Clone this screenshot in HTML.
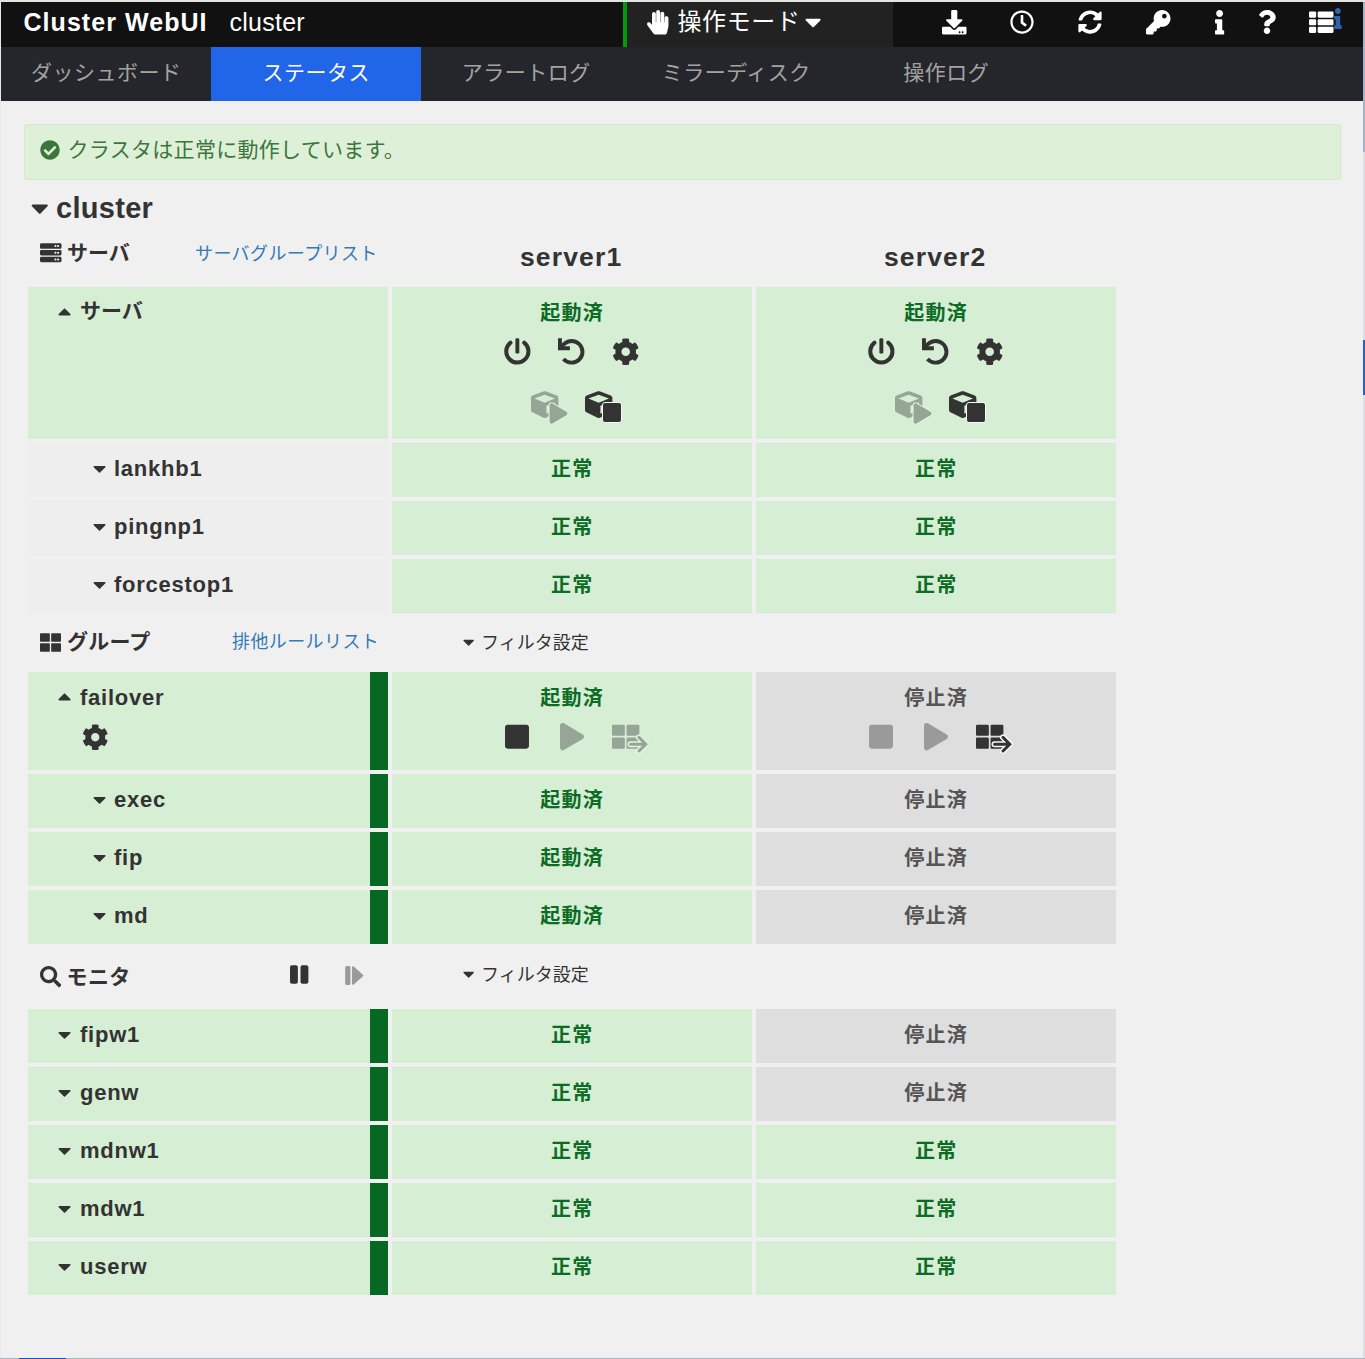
<!DOCTYPE html>
<html lang="ja"><head><meta charset="utf-8"><title>Cluster WebUI</title>
<style>
*{box-sizing:border-box;margin:0;padding:0}
html,body{width:1365px;height:1359px;overflow:hidden}
body{position:relative;background:#f0f0f0;color:#333;font-family:"Liberation Sans","Noto Sans CJK JP",sans-serif;font-size:21px}
.abs,.ic,.t{position:absolute}
.ic{display:block;overflow:visible}
.t{white-space:nowrap;line-height:30px;height:30px}
.b{font-weight:bold}
.c{text-align:center}
#hdr{left:1px;top:2px;width:1362px;height:45px;background:#111}
#tabs{left:1px;top:47px;width:1362px;height:54px;background:#25262b}
.tab{position:absolute;top:-1px;height:54px;width:210px;text-align:center;color:#a3a3a3;font-size:21px;line-height:54px;letter-spacing:.5px;text-indent:.5px}
.tab.on{top:0;line-height:52px}
.tab.on{background:#2165e8;color:#fff}
#mode{left:623px;top:2px;width:270px;height:45px;background:#222;border-left:4px solid #029a0b}
#alert{left:24px;top:124px;width:1317px;height:56px;background:#dff0d8;border:1px solid #d6e9c6;border-radius:3px}
.cell{position:absolute}
.g{background:#d6eed4}
.s{background:#dedede}
.e{background:#eeeeee}
.bar{position:absolute;left:370px;width:18px;background:#076823}
.st{position:absolute;left:0;width:360px;text-align:center;font-weight:bold;font-size:20px;letter-spacing:1.2px;text-indent:.3px;line-height:30px;height:30px;white-space:nowrap}
.gt{color:#0c6b25}
.xt{color:#555}
.lbl{position:absolute;font-weight:bold;font-size:22px;letter-spacing:.75px;line-height:30px;height:30px;white-space:nowrap;color:#333}
.jl{position:absolute;font-weight:bold;font-size:21px;line-height:30px;height:30px;white-space:nowrap;color:#333}
.lnk{position:absolute;letter-spacing:.4px;font-size:18px;line-height:26px;height:26px;white-space:nowrap;color:#337ab7}
.flt{position:absolute;font-size:18px;line-height:26px;height:26px;white-space:nowrap;color:#333}
</style></head>
<body>
<div class="abs" style="left:0;top:0;width:1365px;height:2px;background:#e3e5e3"></div>
<div class="abs" style="left:0;top:2px;width:1px;height:1357px;background:#e9e9e9"></div>
<div class="abs" style="left:1363px;top:2px;width:2px;height:1357px;background:#dcdee0"></div><div class="abs" style="left:1363px;top:2px;width:2px;height:150px;background:#a6b4ca"></div><div class="abs" style="left:1363px;top:340px;width:2px;height:55px;background:#2a62c0"></div>
<div class="abs" style="left:0;top:1358px;width:1365px;height:1px;background:#aab4be"></div><div class="abs" style="left:19px;top:1358px;width:47px;height:1px;background:#1a50c8"></div>
<div id="hdr" class="abs">
<div class="t b" style="left:22.5px;top:5px;font-size:25px;letter-spacing:1.05px;color:#fff">Cluster WebUI</div>
<div class="t" style="left:228.500px;top:5px;font-size:25px;letter-spacing:.25px;color:#fff">cluster</div>
<svg class="ic" style="left:941px;top:8px;width:24.5px;height:24.5px" viewBox="0 0 512 512" ><path fill="#fff" d="M216 0h80c13.3 0 24 10.7 24 24v168h87.7c17.8 0 26.7 21.5 14.1 34.1L269.7 378.3c-7.5 7.5-19.8 7.5-27.3 0L90.1 226.1c-12.6-12.6-3.7-34.1 14.1-34.1H192V24c0-13.3 10.7-24 24-24zm296 376v112c0 13.3-10.7 24-24 24H24c-13.3 0-24-10.7-24-24V376c0-13.3 10.7-24 24-24h146.7l49 49c20.1 20.1 52.5 20.1 72.6 0l49-49H488c13.3 0 24 10.7 24 24zm-124 88c0-11-9-20-20-20s-20 9-20 20 9 20 20 20 20-9 20-20zm64 0c0-11-9-20-20-20s-20 9-20 20 9 20 20 20 20-9 20-20z"/></svg>
<svg class="ic" style="left:1008.8px;top:8px;width:24px;height:24px" viewBox="0 0 512 512" ><path fill="#fff" d="M256 8C119 8 8 119 8 256s111 248 248 248 248-111 248-248S393 8 256 8zm0 448c-110.5 0-200-89.5-200-200S145.5 56 256 56s200 89.5 200 200-89.5 200-200 200zm61.8-104.4l-84.9-61.700c-3.100-2.300-4.900-5.900-4.900-9.700V116c0-6.600 5.400-12 12-12h32c6.600 0 12 5.400 12 12v141.700l66.800 48.600c5.400 3.900 6.500 11.400 2.600 16.800L334.600 349c-3.900 5.300-11.400 6.500-16.800 2.600z"/></svg>
<svg class="ic" style="left:1076.8px;top:8px;width:24px;height:24px" viewBox="0 0 512 512" ><path fill="#fff" d="M370.72 133.28C339.458 104.008 298.888 87.962 255.848 88c-77.458.068-144.328 53.178-162.791 126.85-1.344 5.363-6.122 9.15-11.651 9.15H24.103c-7.498 0-13.194-6.807-11.807-14.176C33.933 94.924 134.813 8 256 8c66.448 0 126.791 26.136 171.315 68.685L463.03 40.97C478.149 25.851 504 36.559 504 57.941V192c0 13.255-10.745 24-24 24H345.941c-21.382 0-32.090-25.851-16.971-40.971l41.750-41.749zM32 296h134.059c21.382 0 32.090 25.851 16.971 40.971l-41.750 41.750c31.262 29.273 71.835 45.319 114.876 45.280 77.418-.070 144.315-53.144 162.787-126.849 1.344-5.363 6.122-9.150 11.651-9.150h57.304c7.498 0 13.194 6.807 11.807 14.176C478.067 417.076 377.187 504 256 504c-66.448 0-126.791-26.136-171.315-68.685L48.970 471.030C33.851 486.149 8 475.441 8 454.059V320c0-13.255 10.745-24 24-24z"/></svg>
<svg class="ic" style="left:1145px;top:8px;width:24.5px;height:24.5px" viewBox="0 0 512 512" ><path fill="#fff" d="M512 176.001C512 273.203 433.202 352 336 352c-11.220 0-22.190-1.062-32.827-3.069l-24.012 27.014A23.999 23.999 0 0 1 261.223 384H224v40c0 13.255-10.745 24-24 24h-40v40c0 13.255-10.745 24-24 24H24c-13.255 0-24-10.745-24-24v-78.059c0-6.365 2.529-12.470 7.029-16.971l161.802-161.802C163.108 213.814 160 195.271 160 176 160 78.798 238.797.001 335.999 0 433.488-.001 512 78.511 512 176.001zM336 128c0 26.510 21.490 48 48 48s48-21.490 48-48-21.490-48-48-48-48 21.490-48 48z"/></svg>
<svg class="ic" style="left:1213.5px;top:8px;width:9.2px;height:24.5px" viewBox="0 0 192 512" ><path fill="#fff" d="M20 424.229h20V279.771H20c-11.046 0-20-8.954-20-20V212c0-11.046 8.954-20 20-20h112c11.046 0 20 8.954 20 20v212.229h20c11.046 0 20 8.954 20 20V492c0 11.046-8.954 20-20 20H20c-11.046 0-20-8.954-20-20v-47.771c0-11.046 8.954-20 20-20zM96 0C56.235 0 24 32.235 24 72s32.235 72 72 72 72-32.235 72-72S135.764 0 96 0z"/></svg>
<svg class="ic" style="left:1257px;top:8px;width:18px;height:24px" viewBox="0 0 384 512" ><path fill="#fff" d="M202.021 0C122.202 0 70.503 32.703 29.914 91.026c-7.363 10.580-5.093 25.086 5.178 32.874l43.138 32.709c10.373 7.865 25.132 6.026 33.253-4.148 25.049-31.381 43.630-49.449 82.757-49.449 30.764 0 68.816 19.799 68.816 49.631 0 22.552-18.617 34.134-48.993 51.164-35.423 19.860-82.299 44.576-82.299 106.405V320c0 13.255 10.745 24 24 24h72.471c13.255 0 24-10.745 24-24v-5.773c0-42.860 125.268-44.645 125.268-160.627C377.504 66.256 286.902 0 202.021 0zM192 373.459c-38.196 0-69.271 31.075-69.271 69.271 0 38.195 31.075 69.270 69.271 69.270s69.271-31.075 69.271-69.271-31.075-69.270-69.271-69.270z"/></svg>
<svg class="ic" style="left:1307.5px;top:8px;width:24.5px;height:24.5px" viewBox="0 0 512 512" ><path fill="#fff" d="M149.333 216v80c0 13.255-10.745 24-24 24H24c-13.255 0-24-10.745-24-24v-80c0-13.255 10.745-24 24-24h101.333c13.255 0 24 10.745 24 24zM0 376v80c0 13.255 10.745 24 24 24h101.333c13.255 0 24-10.745 24-24v-80c0-13.255-10.745-24-24-24H24c-13.255 0-24 10.745-24 24zM125.333 32H24C10.745 32 0 42.745 0 56v80c0 13.255 10.745 24 24 24h101.333c13.255 0 24-10.745 24-24V56c0-13.255-10.745-24-24-24zm80 448H488c13.255 0 24-10.745 24-24v-80c0-13.255-10.745-24-24-24H205.333c-13.255 0-24 10.745-24 24v80c0 13.255 10.745 24 24 24zm-24-424v80c0 13.255 10.745 24 24 24H488c13.255 0 24-10.745 24-24V56c0-13.255-10.745-24-24-24H205.333c-13.255 0-24 10.745-24 24zm24 264H488c13.255 0 24-10.745 24-24v-80c0-13.255-10.745-24-24-24H205.333c-13.255 0-24 10.745-24 24v80c0 13.255 10.745 24 24 24z"/></svg>
<svg class="ic" style="left:1332.5px;top:5.6px;width:7.8px;height:21px" viewBox="0 0 192 512" ><path fill="#2f63ad" d="M20 424.229h20V279.771H20c-11.046 0-20-8.954-20-20V212c0-11.046 8.954-20 20-20h112c11.046 0 20 8.954 20 20v212.229h20c11.046 0 20 8.954 20 20V492c0 11.046-8.954 20-20 20H20c-11.046 0-20-8.954-20-20v-47.771c0-11.046 8.954-20 20-20zM96 0C56.235 0 24 32.235 24 72s32.235 72 72 72 72-32.235 72-72S135.764 0 96 0z"/></svg>
</div>
<div id="mode" class="abs">
<svg class="ic" style="left:20.399999999999977px;top:8px;width:21.5px;height:24.5px" viewBox="0 0 448 512" ><path fill="#fff" d="M408.781 128.007C386.356 127.578 368 146.360 368 168.790V256h-8V79.790c0-22.430-18.356-41.212-40.781-40.783C297.488 39.423 280 57.169 280 79v177h-8V40.790C272 18.360 253.644-.422 231.219.007 209.488.423 192 18.169 192 40v216h-8V80.790c0-22.430-18.356-41.212-40.781-40.783C121.488 40.423 104 58.169 104 80v235.992l-31.648-43.519c-12.993-17.866-38.009-21.817-55.877-8.823-17.865 12.994-21.815 38.010-8.822 55.877l125.601 172.705A48 48 0 0 0 172.073 512h197.590c22.274 0 41.622-15.324 46.724-37.006l26.508-112.660a192.011 192.011 0 0 0 5.104-43.975V168c.001-21.831-17.487-39.577-39.218-39.993z"/></svg>
<div class="t" style="left:50.500px;top:5px;font-size:24px;letter-spacing:.6px;color:#fff">操作モード</div>
<svg class="ic" style="left:178.3px;top:6.800000000000001px;width:16.2px;height:26px" viewBox="0 0 320 512" ><path fill="#fff" d="M31.3 192h257.300c17.800 0 26.700 21.500 14.100 34.100L174.100 354.800c-7.800 7.800-20.500 7.800-28.300 0L17.200 226.100C4.600 213.500 13.500 192 31.300 192z"/></svg>
</div>
<div id="tabs" class="abs">
<div class="tab" style="left:0px">ダッシュボード</div>
<div class="tab on" style="left:210px">ステータス</div>
<div class="tab" style="left:420px">アラートログ</div>
<div class="tab" style="left:630px">ミラーディスク</div>
<div class="tab" style="left:840px">操作ログ</div>
</div>
<div id="alert" class="abs">
<svg class="ic" style="left:15px;top:15px;width:20px;height:20px" viewBox="0 0 512 512" ><path fill="#3c763d" d="M504 256c0 136.967-111.033 248-248 248S8 392.967 8 256 119.033 8 256 8s248 111.033 248 248zM227.314 387.314l184-184c6.248-6.248 6.248-16.379 0-22.627l-22.627-22.627c-6.248-6.249-16.379-6.249-22.628 0L216 308.118l-70.059-70.059c-6.248-6.248-16.379-6.248-22.628 0l-22.627 22.627c-6.248 6.248-6.248 16.379 0 22.627l104 104c6.249 6.249 16.379 6.249 22.628.001z"/></svg>
<div class="t" style="left:42.500px;top:10px;font-size:21px;letter-spacing:.3px;color:#3c763d">クラスタは正常に動作しています。</div>
</div>
<svg class="ic" style="left:30.6px;top:194px;width:17.5px;height:28px" viewBox="0 0 320 512" ><path fill="#333333" d="M31.3 192h257.300c17.800 0 26.700 21.500 14.100 34.100L174.100 354.800c-7.800 7.800-20.500 7.800-28.300 0L17.200 226.100C4.600 213.500 13.500 192 31.300 192z"/></svg>
<div class="t b" style="left:56px;top:190px;font-size:29px;line-height:36px;height:36px;letter-spacing:.3px">cluster</div>
<svg class="ic" style="left:39.5px;top:242.3px;width:21.5px;height:21.5px" viewBox="0 0 512 512" ><path fill="#333333" d="M480 160H32c-17.673 0-32-14.327-32-32V64c0-17.673 14.327-32 32-32h448c17.673 0 32 14.327 32 32v64c0 17.673-14.327 32-32 32zm-48-88c-13.255 0-24 10.745-24 24s10.745 24 24 24 24-10.745 24-24-10.745-24-24-24zm-64 0c-13.255 0-24 10.745-24 24s10.745 24 24 24 24-10.745 24-24-10.745-24-24-24zm112 248H32c-17.673 0-32-14.327-32-32v-64c0-17.673 14.327-32 32-32h448c17.673 0 32 14.327 32 32v64c0 17.673-14.327 32-32 32zm-48-88c-13.255 0-24 10.745-24 24s10.745 24 24 24 24-10.745 24-24-10.745-24-24-24zm-64 0c-13.255 0-24 10.745-24 24s10.745 24 24 24 24-10.745 24-24-10.745-24-24-24zm112 248H32c-17.673 0-32-14.327-32-32v-64c0-17.673 14.327-32 32-32h448c17.673 0 32 14.327 32 32v64c0 17.673-14.327 32-32 32zm-48-88c-13.255 0-24 10.745-24 24s10.745 24 24 24 24-10.745 24-24-10.745-24-24-24zm-64 0c-13.255 0-24 10.745-24 24s10.745 24 24 24 24-10.745 24-24-10.745-24-24-24z"/></svg>
<div class="jl" style="left:67px;top:238px">サーバ</div>
<div class="lnk" style="left:195px;top:241px">サーバグループリスト</div>
<div class="t b c" style="left:391px;width:360px;top:239px;font-size:26.500px;line-height:36px;height:36px;letter-spacing:1.150px;text-indent:.2px">server1</div>
<div class="t b c" style="left:755px;width:360px;top:239px;font-size:26.500px;line-height:36px;height:36px;letter-spacing:1.150px;text-indent:.2px">server2</div>
<div class="cell g" style="left:28px;top:287px;width:360px;height:152px">
<svg class="ic" style="left:30.4px;top:14.200000000000012px;width:13.1px;height:21px" viewBox="0 0 320 512" ><path fill="#333333" d="M288.662 352H31.338c-17.818 0-26.741-21.543-14.142-34.142l128.662-128.662c7.810-7.810 20.474-7.810 28.284 0l128.662 128.662c12.600 12.599 3.676 34.142-14.142 34.142z"/></svg>
<div class="jl" style="left:52px;top:9px">サーバ</div>
</div>
<div class="cell g" style="left:392px;top:287px;width:360px;height:152px"><div class="st gt" style="top:10.5px">起動済</div>
<svg class="ic" style="left:110px;top:49px;width:30px;height:30px" viewBox="0 0 30 30" fill="none" stroke="#333333" stroke-width="4"><path d="M22.180 6.700A11.100 11.100 0 1 1 8.520 6.700" stroke-linecap="round"/><rect x="13.400" y="2.300" width="3.900" height="15.200" rx="1.300" fill="#333333" stroke="none"/></svg>
<svg class="ic" style="left:164px;top:49px;width:30px;height:30px" viewBox="0 0 30 30" fill="none" stroke="#333333" stroke-width="3.900"><path d="M3.950 2.200V12.200H13.900" stroke-linejoin="miter"/><path d="M3.950 12.200L7.900 8.200A10.850 10.850 0 1 1 7.500 23" stroke-linejoin="round"/></svg>
<svg class="ic" style="left:220px;top:51px;width:27.4px;height:27.4px" viewBox="0 0 512 512" ><path fill="#333333" d="M487.400 315.700l-42.600-24.600c4.300-23.200 4.300-47 0-70.200l42.600-24.600c4.900-2.800 7.100-8.600 5.500-14-11.100-35.600-30-67.800-54.700-94.600-3.800-4.100-10-5.100-14.800-2.300L380.800 110c-17.900-15.400-38.500-27.300-60.800-35.100V25.800c0-5.600-3.900-10.500-9.400-11.700-36.700-8.200-74.300-7.800-109.200 0-5.500 1.200-9.400 6.100-9.400 11.700V75c-22.200 7.900-42.800 19.800-60.800 35.100L88.700 85.500c-4.900-2.800-11-1.900-14.800 2.300-24.700 26.700-43.600 58.900-54.700 94.600-1.700 5.400.6 11.200 5.500 14L67.300 221c-4.300 23.200-4.300 47 0 70.200l-42.600 24.600c-4.900 2.800-7.100 8.600-5.500 14 11.100 35.600 30 67.800 54.700 94.600 3.800 4.100 10 5.100 14.800 2.300l42.600-24.600c17.900 15.400 38.500 27.300 60.800 35.100v49.200c0 5.600 3.900 10.500 9.400 11.700 36.700 8.200 74.300 7.800 109.200 0 5.500-1.200 9.400-6.100 9.400-11.700v-49.200c22.200-7.900 42.800-19.800 60.800-35.100l42.600 24.600c4.900 2.800 11 1.900 14.800-2.300 24.700-26.700 43.600-58.900 54.700-94.600 1.500-5.500-.7-11.300-5.600-14.100zM256 336c-44.100 0-80-35.900-80-80s35.900-80 80-80 80 35.900 80 80-35.900 80-80 80z"/></svg>
<svg class="ic" style="left:139px;top:104px;width:27.4px;height:27.4px" viewBox="0 0 512 512" ><path fill="#95a596" d="M239.1 6.300l-208 78c-18.700 7-31.100 25-31.100 45v225.100c0 18.200 10.300 34.800 26.500 42.900l208 104c13.500 6.800 29.400 6.800 42.900 0l208-104c16.300-8.100 26.500-24.800 26.500-42.900V129.300c0-20-12.400-37.900-31.100-44.900l-208-78C262 2.200 250 2.200 239.100 6.300zM256 68.400l192 72v1.100l-192 78-192-78v-1.100l192-72zm32 356V275.500l160-65v133.900l-160 80z"/></svg><svg class="ic" style="left:155.5px;top:114.5px;width:21px;height:23px" viewBox="-32 -32 512 576"><path fill="#95a596" stroke="#e6f5e4" stroke-width="50" stroke-linejoin="round" paint-order="stroke" d="M424.4 214.7L72.4 6.600C43.800-10.300 0 6.100 0 47.900V464c0 37.500 40.700 60.100 72.400 41.300l352-208c31.400-18.500 31.500-64.100 0-82.600z"/></svg>
<svg class="ic" style="left:193px;top:104px;width:27.4px;height:27.4px" viewBox="0 0 512 512" ><path fill="#333333" d="M239.1 6.300l-208 78c-18.700 7-31.100 25-31.100 45v225.100c0 18.200 10.300 34.800 26.500 42.900l208 104c13.500 6.800 29.400 6.800 42.900 0l208-104c16.300-8.100 26.500-24.800 26.500-42.900V129.300c0-20-12.400-37.900-31.100-44.900l-208-78C262 2.200 250 2.200 239.100 6.300zM256 68.400l192 72v1.100l-192 78-192-78v-1.100l192-72zm32 356V275.500l160-65v133.900l-160 80z"/></svg><div class="abs" style="left:209.6px;top:115.2px;width:20.4px;height:20.6px;background:#333333;border:1px solid #f4fbf3;border-radius:3px"></div>
</div>
<div class="cell g" style="left:756px;top:287px;width:360px;height:152px"><div class="st gt" style="top:10.5px">起動済</div>
<svg class="ic" style="left:110px;top:49px;width:30px;height:30px" viewBox="0 0 30 30" fill="none" stroke="#333333" stroke-width="4"><path d="M22.180 6.700A11.100 11.100 0 1 1 8.520 6.700" stroke-linecap="round"/><rect x="13.400" y="2.300" width="3.900" height="15.200" rx="1.300" fill="#333333" stroke="none"/></svg>
<svg class="ic" style="left:164px;top:49px;width:30px;height:30px" viewBox="0 0 30 30" fill="none" stroke="#333333" stroke-width="3.900"><path d="M3.950 2.200V12.200H13.900" stroke-linejoin="miter"/><path d="M3.950 12.200L7.900 8.200A10.850 10.850 0 1 1 7.500 23" stroke-linejoin="round"/></svg>
<svg class="ic" style="left:220px;top:51px;width:27.4px;height:27.4px" viewBox="0 0 512 512" ><path fill="#333333" d="M487.400 315.700l-42.600-24.600c4.300-23.200 4.300-47 0-70.200l42.600-24.600c4.900-2.800 7.100-8.600 5.500-14-11.100-35.600-30-67.800-54.700-94.600-3.800-4.100-10-5.100-14.800-2.300L380.800 110c-17.900-15.400-38.500-27.300-60.800-35.100V25.800c0-5.600-3.900-10.500-9.400-11.700-36.700-8.200-74.300-7.800-109.200 0-5.500 1.200-9.400 6.100-9.400 11.700V75c-22.200 7.900-42.800 19.800-60.800 35.100L88.700 85.500c-4.900-2.800-11-1.900-14.800 2.300-24.700 26.700-43.600 58.900-54.700 94.600-1.700 5.400.6 11.200 5.500 14L67.300 221c-4.300 23.200-4.300 47 0 70.200l-42.600 24.600c-4.900 2.800-7.100 8.600-5.500 14 11.100 35.600 30 67.800 54.700 94.600 3.800 4.100 10 5.100 14.800 2.300l42.600-24.600c17.900 15.400 38.500 27.300 60.800 35.100v49.200c0 5.600 3.900 10.500 9.400 11.700 36.700 8.200 74.300 7.800 109.200 0 5.500-1.200 9.400-6.100 9.400-11.700v-49.200c22.200-7.900 42.800-19.800 60.800-35.100l42.600 24.600c4.900 2.800 11 1.900 14.800-2.300 24.700-26.700 43.600-58.900 54.700-94.600 1.500-5.500-.7-11.300-5.600-14.100zM256 336c-44.100 0-80-35.900-80-80s35.900-80 80-80 80 35.900 80 80-35.900 80-80 80z"/></svg>
<svg class="ic" style="left:139px;top:104px;width:27.4px;height:27.4px" viewBox="0 0 512 512" ><path fill="#95a596" d="M239.1 6.300l-208 78c-18.700 7-31.100 25-31.100 45v225.100c0 18.200 10.300 34.800 26.500 42.900l208 104c13.500 6.800 29.400 6.800 42.900 0l208-104c16.300-8.100 26.500-24.800 26.500-42.900V129.300c0-20-12.400-37.900-31.100-44.900l-208-78C262 2.200 250 2.200 239.100 6.300zM256 68.400l192 72v1.100l-192 78-192-78v-1.100l192-72zm32 356V275.500l160-65v133.900l-160 80z"/></svg><svg class="ic" style="left:155.5px;top:114.5px;width:21px;height:23px" viewBox="-32 -32 512 576"><path fill="#95a596" stroke="#e6f5e4" stroke-width="50" stroke-linejoin="round" paint-order="stroke" d="M424.4 214.7L72.4 6.600C43.800-10.300 0 6.100 0 47.900V464c0 37.500 40.700 60.100 72.400 41.300l352-208c31.400-18.500 31.500-64.100 0-82.600z"/></svg>
<svg class="ic" style="left:193px;top:104px;width:27.4px;height:27.4px" viewBox="0 0 512 512" ><path fill="#333333" d="M239.1 6.300l-208 78c-18.700 7-31.100 25-31.100 45v225.100c0 18.200 10.300 34.800 26.500 42.900l208 104c13.500 6.800 29.400 6.800 42.900 0l208-104c16.300-8.100 26.500-24.800 26.500-42.900V129.300c0-20-12.400-37.900-31.100-44.900l-208-78C262 2.200 250 2.200 239.100 6.300zM256 68.400l192 72v1.100l-192 78-192-78v-1.100l192-72zm32 356V275.500l160-65v133.900l-160 80z"/></svg><div class="abs" style="left:209.6px;top:115.2px;width:20.4px;height:20.6px;background:#333333;border:1px solid #f4fbf3;border-radius:3px"></div>
</div>
<div class="cell e" style="left:28px;top:443px;width:360px;height:54px"><svg class="ic" style="left:65.4px;top:14.6px;width:13.1px;height:21px" viewBox="0 0 320 512" ><path fill="#333333" d="M31.3 192h257.300c17.800 0 26.700 21.500 14.100 34.100L174.100 354.800c-7.800 7.800-20.500 7.800-28.300 0L17.200 226.100C4.600 213.500 13.500 192 31.300 192z"/></svg><div class="lbl" style="left:86px;top:11px">lankhb1</div></div>
<div class="cell g" style="left:392px;top:443px;width:360px;height:54px"><div class="st gt" style="top:10.5px">正常</div></div>
<div class="cell g" style="left:756px;top:443px;width:360px;height:54px"><div class="st gt" style="top:10.5px">正常</div></div>
<div class="cell e" style="left:28px;top:501px;width:360px;height:54px"><svg class="ic" style="left:65.4px;top:14.6px;width:13.1px;height:21px" viewBox="0 0 320 512" ><path fill="#333333" d="M31.3 192h257.300c17.800 0 26.700 21.500 14.100 34.100L174.100 354.800c-7.800 7.800-20.500 7.800-28.300 0L17.200 226.100C4.600 213.500 13.500 192 31.300 192z"/></svg><div class="lbl" style="left:86px;top:11px">pingnp1</div></div>
<div class="cell g" style="left:392px;top:501px;width:360px;height:54px"><div class="st gt" style="top:10.5px">正常</div></div>
<div class="cell g" style="left:756px;top:501px;width:360px;height:54px"><div class="st gt" style="top:10.5px">正常</div></div>
<div class="cell e" style="left:28px;top:559px;width:360px;height:54px"><svg class="ic" style="left:65.4px;top:14.6px;width:13.1px;height:21px" viewBox="0 0 320 512" ><path fill="#333333" d="M31.3 192h257.300c17.800 0 26.700 21.500 14.100 34.100L174.100 354.800c-7.800 7.800-20.500 7.800-28.300 0L17.200 226.100C4.600 213.500 13.500 192 31.300 192z"/></svg><div class="lbl" style="left:86px;top:11px">forcestop1</div></div>
<div class="cell g" style="left:392px;top:559px;width:360px;height:54px"><div class="st gt" style="top:10.5px">正常</div></div>
<div class="cell g" style="left:756px;top:559px;width:360px;height:54px"><div class="st gt" style="top:10.5px">正常</div></div>
<svg class="ic" style="left:39.5px;top:631.5px;width:21px;height:21px" viewBox="0 0 512 512" ><path fill="#333333" d="M296 32h192c13.255 0 24 10.745 24 24v160c0 13.255-10.745 24-24 24H296c-13.255 0-24-10.745-24-24V56c0-13.255 10.745-24 24-24zm-80 0H24C10.745 32 0 42.745 0 56v160c0 13.255 10.745 24 24 24h192c13.255 0 24-10.745 24-24V56c0-13.255-10.745-24-24-24zM0 296v160c0 13.255 10.745 24 24 24h192c13.255 0 24-10.745 24-24V296c0-13.255-10.745-24-24-24H24c-13.255 0-24 10.745-24 24zm296 184h192c13.255 0 24-10.745 24-24V296c0-13.255-10.745-24-24-24H296c-13.255 0-24 10.745-24 24v160c0 13.255 10.745 24 24 24z"/></svg>
<div class="jl" style="left:67px;top:626.500px;letter-spacing:.2px">グループ</div>
<div class="lnk" style="left:232px;top:629px">排他ルールリスト</div>
<svg class="ic" style="left:463.2px;top:632.5px;width:11.3px;height:18px" viewBox="0 0 320 512" ><path fill="#333333" d="M31.3 192h257.300c17.800 0 26.700 21.500 14.100 34.100L174.100 354.800c-7.800 7.800-20.500 7.800-28.300 0L17.200 226.100C4.600 213.500 13.500 192 31.300 192z"/></svg><div class="flt" style="left:481px;top:629.5px">フィルタ設定</div>
<div class="cell g" style="left:28px;top:672px;width:360px;height:98px"><svg class="ic" style="left:30.4px;top:14.4px;width:13.1px;height:21px" viewBox="0 0 320 512" ><path fill="#333333" d="M288.662 352H31.338c-17.818 0-26.741-21.543-14.142-34.142l128.662-128.662c7.810-7.810 20.474-7.810 28.284 0l128.662 128.662c12.600 12.599 3.676 34.142-14.142 34.142z"/></svg><div class="lbl" style="left:52px;top:11px">failover</div><svg class="ic" style="left:54.3px;top:51.5px;width:26.5px;height:26.5px" viewBox="0 0 512 512" ><path fill="#333333" d="M487.400 315.700l-42.600-24.600c4.300-23.200 4.300-47 0-70.200l42.600-24.600c4.900-2.800 7.100-8.600 5.500-14-11.100-35.600-30-67.800-54.700-94.600-3.800-4.100-10-5.100-14.800-2.300L380.800 110c-17.900-15.400-38.500-27.300-60.800-35.100V25.800c0-5.600-3.900-10.500-9.400-11.700-36.700-8.200-74.300-7.800-109.200 0-5.500 1.200-9.400 6.100-9.400 11.700V75c-22.200 7.900-42.800 19.800-60.800 35.100L88.700 85.500c-4.900-2.800-11-1.900-14.800 2.300-24.700 26.700-43.600 58.900-54.700 94.600-1.700 5.400.6 11.200 5.500 14L67.300 221c-4.300 23.200-4.300 47 0 70.200l-42.600 24.600c-4.900 2.800-7.100 8.600-5.500 14 11.100 35.600 30 67.800 54.700 94.600 3.800 4.100 10 5.100 14.800 2.300l42.600-24.600c17.900 15.400 38.500 27.300 60.800 35.100v49.200c0 5.600 3.900 10.500 9.400 11.700 36.700 8.200 74.300 7.800 109.200 0 5.500-1.200 9.400-6.100 9.400-11.700v-49.200c22.200-7.900 42.800-19.800 60.800-35.100l42.600 24.600c4.900 2.800 11 1.900 14.800-2.300 24.700-26.700 43.600-58.900 54.700-94.600 1.500-5.500-.7-11.300-5.600-14.100zM256 336c-44.100 0-80-35.900-80-80s35.900-80 80-80 80 35.900 80 80-35.900 80-80 80z"/></svg><div class="bar" style="left:342px;top:0;height:98px"></div></div>
<div class="cell g" style="left:392px;top:672px;width:360px;height:98px"><div class="st gt" style="top:10.5px">起動済</div>
<svg class="ic" style="left:113.30000000000001px;top:51px;width:24px;height:27.4px" viewBox="0 0 448 512" ><path fill="#333333" d="M400 32H48C21.500 32 0 53.500 0 80v352c0 26.500 21.500 48 48 48h352c26.500 0 48-21.500 48-48V80c0-26.500-21.500-48-48-48z"/></svg>
<svg class="ic" style="left:167.5px;top:50.799999999999955px;width:24px;height:27.4px" viewBox="0 0 448 512" ><path fill="#95a596" d="M424.4 214.7L72.4 6.600C43.800-10.300 0 6.100 0 47.900V464c0 37.500 40.700 60.100 72.400 41.300l352-208c31.400-18.500 31.500-64.100 0-82.600z"/></svg>
<svg class="ic" style="left:220px;top:51.3px;width:27.4px;height:27.4px" viewBox="0 0 512 512" ><path fill="#95a596" d="M296 32h192c13.255 0 24 10.745 24 24v160c0 13.255-10.745 24-24 24H296c-13.255 0-24-10.745-24-24V56c0-13.255 10.745-24 24-24zm-80 0H24C10.745 32 0 42.745 0 56v160c0 13.255 10.745 24 24 24h192c13.255 0 24-10.745 24-24V56c0-13.255-10.745-24-24-24zM0 296v160c0 13.255 10.745 24 24 24h192c13.255 0 24-10.745 24-24V296c0-13.255-10.745-24-24-24H24c-13.255 0-24 10.745-24 24zm296 184h192c13.255 0 24-10.745 24-24V296c0-13.255-10.745-24-24-24H296c-13.255 0-24 10.745-24 24v160c0 13.255 10.745 24 24 24z"/></svg><svg class="ic" style="left:234px;top:60.5px;width:24px;height:22px" viewBox="0 0 24 22"><path d="M4.500 11.200h14M13 4.400l6.800 6.800-6.800 6.800" fill="none" stroke="#e4f4e2" stroke-width="6" stroke-linecap="round" stroke-linejoin="round"/><path d="M4.500 11.200h14M13 4.400l6.800 6.800-6.800 6.800" fill="none" stroke="#95a596" stroke-width="3" stroke-linecap="round" stroke-linejoin="miter"/></svg>
</div>
<div class="cell s" style="left:756px;top:672px;width:360px;height:98px"><div class="st xt" style="top:10.5px">停止済</div>
<svg class="ic" style="left:113.30000000000001px;top:51px;width:24px;height:27.4px" viewBox="0 0 448 512" ><path fill="#9a9a9a" d="M400 32H48C21.500 32 0 53.500 0 80v352c0 26.500 21.500 48 48 48h352c26.500 0 48-21.500 48-48V80c0-26.500-21.500-48-48-48z"/></svg>
<svg class="ic" style="left:167.5px;top:50.799999999999955px;width:24px;height:27.4px" viewBox="0 0 448 512" ><path fill="#9a9a9a" d="M424.4 214.7L72.4 6.600C43.800-10.300 0 6.100 0 47.900V464c0 37.500 40.700 60.100 72.400 41.300l352-208c31.400-18.500 31.500-64.100 0-82.600z"/></svg>
<svg class="ic" style="left:220px;top:51.3px;width:27.4px;height:27.4px" viewBox="0 0 512 512" ><path fill="#333333" d="M296 32h192c13.255 0 24 10.745 24 24v160c0 13.255-10.745 24-24 24H296c-13.255 0-24-10.745-24-24V56c0-13.255 10.745-24 24-24zm-80 0H24C10.745 32 0 42.745 0 56v160c0 13.255 10.745 24 24 24h192c13.255 0 24-10.745 24-24V56c0-13.255-10.745-24-24-24zM0 296v160c0 13.255 10.745 24 24 24h192c13.255 0 24-10.745 24-24V296c0-13.255-10.745-24-24-24H24c-13.255 0-24 10.745-24 24zm296 184h192c13.255 0 24-10.745 24-24V296c0-13.255-10.745-24-24-24H296c-13.255 0-24 10.745-24 24v160c0 13.255 10.745 24 24 24z"/></svg><svg class="ic" style="left:234px;top:60.5px;width:24px;height:22px" viewBox="0 0 24 22"><path d="M4.500 11.200h14M13 4.400l6.800 6.800-6.800 6.800" fill="none" stroke="#fafafa" stroke-width="6" stroke-linecap="round" stroke-linejoin="round"/><path d="M4.500 11.200h14M13 4.400l6.800 6.800-6.800 6.800" fill="none" stroke="#333333" stroke-width="3" stroke-linecap="round" stroke-linejoin="miter"/></svg>
</div>
<div class="cell g" style="left:28px;top:774px;width:360px;height:54px"><svg class="ic" style="left:65.4px;top:14.6px;width:13.1px;height:21px" viewBox="0 0 320 512" ><path fill="#333333" d="M31.3 192h257.300c17.800 0 26.700 21.500 14.100 34.100L174.100 354.800c-7.800 7.800-20.500 7.800-28.300 0L17.200 226.100C4.600 213.500 13.500 192 31.300 192z"/></svg><div class="lbl" style="left:86px;top:11px">exec</div><div class="bar" style="left:342px;top:0;height:54px"></div></div>
<div class="cell g" style="left:392px;top:774px;width:360px;height:54px"><div class="st gt" style="top:10.5px">起動済</div></div>
<div class="cell s" style="left:756px;top:774px;width:360px;height:54px"><div class="st xt" style="top:10.5px">停止済</div></div>
<div class="cell g" style="left:28px;top:832px;width:360px;height:54px"><svg class="ic" style="left:65.4px;top:14.6px;width:13.1px;height:21px" viewBox="0 0 320 512" ><path fill="#333333" d="M31.3 192h257.300c17.800 0 26.700 21.500 14.100 34.100L174.100 354.800c-7.800 7.800-20.500 7.800-28.300 0L17.200 226.100C4.600 213.500 13.500 192 31.300 192z"/></svg><div class="lbl" style="left:86px;top:11px">fip</div><div class="bar" style="left:342px;top:0;height:54px"></div></div>
<div class="cell g" style="left:392px;top:832px;width:360px;height:54px"><div class="st gt" style="top:10.5px">起動済</div></div>
<div class="cell s" style="left:756px;top:832px;width:360px;height:54px"><div class="st xt" style="top:10.5px">停止済</div></div>
<div class="cell g" style="left:28px;top:890px;width:360px;height:54px"><svg class="ic" style="left:65.4px;top:14.6px;width:13.1px;height:21px" viewBox="0 0 320 512" ><path fill="#333333" d="M31.3 192h257.300c17.800 0 26.700 21.500 14.100 34.100L174.100 354.800c-7.800 7.800-20.500 7.800-28.300 0L17.200 226.100C4.600 213.500 13.500 192 31.300 192z"/></svg><div class="lbl" style="left:86px;top:11px">md</div><div class="bar" style="left:342px;top:0;height:54px"></div></div>
<div class="cell g" style="left:392px;top:890px;width:360px;height:54px"><div class="st gt" style="top:10.5px">起動済</div></div>
<div class="cell s" style="left:756px;top:890px;width:360px;height:54px"><div class="st xt" style="top:10.5px">停止済</div></div>
<svg class="ic" style="left:39.5px;top:965.6px;width:21.2px;height:21.2px" viewBox="0 0 512 512" ><path fill="#333333" d="M505 442.700L405.300 343c-4.500-4.500-10.600-7-17-7H372c27.600-35.300 44-79.700 44-128C416 93.100 322.900 0 208 0S0 93.100 0 208s93.100 208 208 208c48.300 0 92.700-16.400 128-44v16.300c0 6.400 2.500 12.500 7 17l99.700 99.700c9.400 9.400 24.600 9.400 33.900 0l28.300-28.300c9.400-9.400 9.400-24.600.1-34zM208 336c-70.700 0-128-57.200-128-128 0-70.700 57.200-128 128-128 70.700 0 128 57.200 128 128 0 70.700-57.200 128-128 128z"/></svg>
<div class="jl" style="left:66.500px;top:961.500px;letter-spacing:.4px">モニタ</div>
<svg class="ic" style="left:289.8px;top:964.4px;width:18.4px;height:21px" viewBox="0 0 448 512" ><path fill="#333333" d="M144 479H48c-26.500 0-48-21.500-48-48V79c0-26.500 21.500-48 48-48h96c26.500 0 48 21.500 48 48v352c0 26.500-21.500 48-48 48zm304-48V79c0-26.500-21.500-48-48-48h-96c-26.500 0-48 21.500-48 48v352c0 26.500 21.500 48 48 48h96c26.500 0 48-21.500 48-48z"/></svg>
<svg class="ic" style="left:344.5px;top:966px;width:19px;height:19px" viewBox="0 0 19 19"><rect x="0.200" y="0" width="5.200" height="19" rx="1.500" fill="#9a9a9a"/><path d="M7 1.200v16.600c0 .9 1 1.400 1.700.8l9.300-8.300c.5-.4.5-1.200 0-1.600L8.700.400C8-.200 7 .300 7 1.200z" fill="#9a9a9a"/></svg>
<svg class="ic" style="left:463.2px;top:965.0px;width:11.3px;height:18px" viewBox="0 0 320 512" ><path fill="#333333" d="M31.3 192h257.300c17.800 0 26.700 21.500 14.100 34.100L174.100 354.800c-7.800 7.800-20.500 7.800-28.300 0L17.200 226.100C4.600 213.500 13.500 192 31.300 192z"/></svg><div class="flt" style="left:481px;top:962.0px">フィルタ設定</div>
<div class="cell g" style="left:28px;top:1009px;width:360px;height:54px"><svg class="ic" style="left:30.4px;top:14.6px;width:13.1px;height:21px" viewBox="0 0 320 512" ><path fill="#333333" d="M31.3 192h257.300c17.800 0 26.700 21.500 14.100 34.100L174.100 354.800c-7.800 7.800-20.500 7.800-28.300 0L17.200 226.100C4.600 213.500 13.500 192 31.300 192z"/></svg><div class="lbl" style="left:52px;top:11px">fipw1</div><div class="bar" style="left:342px;top:0;height:54px"></div></div>
<div class="cell g" style="left:392px;top:1009px;width:360px;height:54px"><div class="st gt" style="top:10.5px">正常</div></div>
<div class="cell s" style="left:756px;top:1009px;width:360px;height:54px"><div class="st xt" style="top:10.5px">停止済</div></div>
<div class="cell g" style="left:28px;top:1067px;width:360px;height:54px"><svg class="ic" style="left:30.4px;top:14.6px;width:13.1px;height:21px" viewBox="0 0 320 512" ><path fill="#333333" d="M31.3 192h257.300c17.800 0 26.700 21.500 14.100 34.100L174.100 354.800c-7.800 7.800-20.500 7.800-28.300 0L17.200 226.100C4.600 213.500 13.500 192 31.300 192z"/></svg><div class="lbl" style="left:52px;top:11px">genw</div><div class="bar" style="left:342px;top:0;height:54px"></div></div>
<div class="cell g" style="left:392px;top:1067px;width:360px;height:54px"><div class="st gt" style="top:10.5px">正常</div></div>
<div class="cell s" style="left:756px;top:1067px;width:360px;height:54px"><div class="st xt" style="top:10.5px">停止済</div></div>
<div class="cell g" style="left:28px;top:1125px;width:360px;height:54px"><svg class="ic" style="left:30.4px;top:14.6px;width:13.1px;height:21px" viewBox="0 0 320 512" ><path fill="#333333" d="M31.3 192h257.300c17.800 0 26.700 21.500 14.100 34.100L174.100 354.800c-7.800 7.800-20.500 7.800-28.300 0L17.200 226.100C4.600 213.500 13.500 192 31.300 192z"/></svg><div class="lbl" style="left:52px;top:11px">mdnw1</div><div class="bar" style="left:342px;top:0;height:54px"></div></div>
<div class="cell g" style="left:392px;top:1125px;width:360px;height:54px"><div class="st gt" style="top:10.5px">正常</div></div>
<div class="cell g" style="left:756px;top:1125px;width:360px;height:54px"><div class="st gt" style="top:10.5px">正常</div></div>
<div class="cell g" style="left:28px;top:1183px;width:360px;height:54px"><svg class="ic" style="left:30.4px;top:14.6px;width:13.1px;height:21px" viewBox="0 0 320 512" ><path fill="#333333" d="M31.3 192h257.300c17.800 0 26.700 21.500 14.100 34.100L174.100 354.800c-7.800 7.800-20.500 7.800-28.300 0L17.200 226.100C4.600 213.500 13.500 192 31.300 192z"/></svg><div class="lbl" style="left:52px;top:11px">mdw1</div><div class="bar" style="left:342px;top:0;height:54px"></div></div>
<div class="cell g" style="left:392px;top:1183px;width:360px;height:54px"><div class="st gt" style="top:10.5px">正常</div></div>
<div class="cell g" style="left:756px;top:1183px;width:360px;height:54px"><div class="st gt" style="top:10.5px">正常</div></div>
<div class="cell g" style="left:28px;top:1241px;width:360px;height:54px"><svg class="ic" style="left:30.4px;top:14.6px;width:13.1px;height:21px" viewBox="0 0 320 512" ><path fill="#333333" d="M31.3 192h257.300c17.800 0 26.700 21.500 14.100 34.100L174.100 354.800c-7.800 7.800-20.500 7.800-28.300 0L17.200 226.100C4.600 213.500 13.500 192 31.300 192z"/></svg><div class="lbl" style="left:52px;top:11px">userw</div><div class="bar" style="left:342px;top:0;height:54px"></div></div>
<div class="cell g" style="left:392px;top:1241px;width:360px;height:54px"><div class="st gt" style="top:10.5px">正常</div></div>
<div class="cell g" style="left:756px;top:1241px;width:360px;height:54px"><div class="st gt" style="top:10.5px">正常</div></div>
</body></html>
